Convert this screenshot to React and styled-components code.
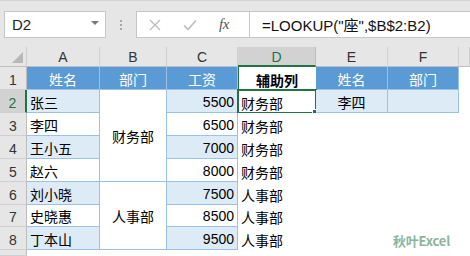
import React from 'react';
import styled, { createGlobalStyle } from 'styled-components';

const GlobalStyle = createGlobalStyle`
  html, body { margin: 0; padding: 0; background: #ffffff; }
  body {
    width: 470px; height: 256px; overflow: hidden;
    font-family: "Liberation Sans", "Noto Sans CJK SC", sans-serif;
  }
`;

const GREEN = '#217346';
const LINE = '#9bc2e6';
const HEAD = '#5b9bd5';
const BAND = '#ddebf7';

const Page = styled.div`
  position: relative;
  width: 470px;
  height: 256px;
  display: flex;
  flex-direction: column;
  background: #ffffff;
`;

const FormulaBar = styled.div`
  height: 47px;
  flex: none;
  box-sizing: border-box;
  background: #e6e6e6;
  border-top: 1px solid #d4d4d4;
  display: flex;
  align-items: flex-start;
  padding: 10px 0 0 4px;
`;

const NameBox = styled.div`
  width: 102px;
  height: 27px;
  box-sizing: border-box;
  background: #fff;
  border: 1px solid #c6c6c6;
  display: flex;
  align-items: center;
  justify-content: space-between;
  padding: 0 6px 0 7px;
  font-size: 15px;
  color: #222;
`;

const Caret = styled.span`
  width: 0; height: 0;
  border-left: 4px solid transparent;
  border-right: 4px solid transparent;
  border-top: 4px solid #777;
  margin-top: -3px;
`;

const Dots = styled.div`
  width: 30px;
  height: 27px;
  display: flex;
  flex-direction: column;
  align-items: center;
  justify-content: center;
  gap: 2px;
`;

const Dot = styled.span`
  width: 2px; height: 2px; background: #a8a8a8;
`;

const FxBox = styled.div`
  width: 113px;
  height: 27px;
  box-sizing: border-box;
  background: #fff;
  border: 1px solid #c6c6c6;
  border-right: none;
  display: flex;
  align-items: center;
  padding-left: 12px;
`;

const IconSlot = styled.span`
  width: ${p => p.$w}px;
  display: flex;
  align-items: center;
`;

const Fx = styled.span`
  font-family: "Liberation Serif", serif;
  font-style: italic;
  font-size: 15px;
  color: #555;
  letter-spacing: -0.5px;
`;

const FormulaInput = styled.div`
  flex: 1;
  height: 27px;
  box-sizing: border-box;
  background: #fff;
  border: 1px solid #c6c6c6;
  border-right: none;
  display: flex;
  align-items: center;
  padding-left: 12px;
  font-size: 15px;
  color: #111;
  white-space: nowrap;
`;

const Sheet = styled.div`
  flex: 1;
  display: grid;
  grid-template-columns: 27px 73px 67px 71px 78px 72px 71px 1fr;
  grid-template-rows: 20px 23px 23px 23px 23px 23px 23px 22px 23px 1fr;
  background: #fff;
`;

const Corner = styled.div`
  background: #e6e6e6;
  border-right: 1px solid #cfcfcf;
  border-bottom: 1px solid #bdbdbd;
  box-sizing: border-box;
  display: flex;
  align-items: flex-end;
  justify-content: flex-end;
  padding: 0 3px 3px 0;
`;

const Tri = styled.span`
  width: 0; height: 0;
  border-left: 11px solid transparent;
  border-bottom: 11px solid #b8b8b8;
`;

const ColHead = styled.div`
  box-sizing: border-box;
  background: ${p => (p.$sel ? '#d2d2d2' : '#e6e6e6')};
  color: ${p => (p.$sel ? GREEN : '#333')};
  border-right: 1px solid ${p => (p.$sel ? '#bdbdbd' : '#d0d0d0')};
  border-bottom: ${p => (p.$sel ? `2px solid ${GREEN}` : '1px solid #bdbdbd')};
  display: flex;
  align-items: flex-end;
  justify-content: center;
  padding-bottom: ${p => (p.$sel ? 1 : 2)}px;
  font-size: 14px;
  line-height: 14px;
`;

const RowHead = styled.div`
  box-sizing: border-box;
  background: ${p => (p.$sel ? '#d2d2d2' : '#e6e6e6')};
  color: ${p => (p.$sel ? GREEN : '#333')};
  border-right: ${p => (p.$sel ? `2px solid ${GREEN}` : '1px solid #bdbdbd')};
  border-bottom: 1px solid #cfcfcf;
  display: flex;
  align-items: flex-end;
  justify-content: center;
  padding-bottom: 2px;
  font-size: 14px;
  line-height: 14px;
`;

const fills = {
  head: HEAD,
  band: BAND,
  white: '#ffffff',
  none: '#ffffff',
};

const Cell = styled.div`
  position: relative;
  box-sizing: border-box;
  background: ${p => fills[p.$fill || 'none']};
  color: ${p => (p.$fill === 'head' ? '#ffffff' : '#000000')};
  border-right: ${p => (p.$grid ? `1px solid ${LINE}` : 'none')};
  border-bottom: ${p => (p.$grid ? `1px solid ${LINE}` : 'none')};
  box-shadow: ${p => (p.$mark ? `inset 1px 0 0 ${GREEN}` : 'none')};
  grid-row: ${p => (p.$span ? `span ${p.$span}` : 'auto')};
  display: flex;
  align-items: ${p => (p.$span ? 'center' : 'flex-end')};
  justify-content: ${p => p.$align || 'flex-start'};
  padding: ${p => (p.$span ? '0 3px' : '0 3px 2px 3px')};
  font-family: ${p => (p.$num ? '"Liberation Sans", sans-serif' : '"Noto Sans CJK SC", sans-serif')};
  font-size: 14px;
  line-height: 16px;
  font-weight: ${p => (p.$bold ? 700 : 400)};
  white-space: nowrap;
`;

const Selection = styled.span`
  position: absolute;
  left: -1px;
  top: -1px;
  right: -1px;
  bottom: -1px;
  border: 2px solid ${GREEN};
  pointer-events: none;
`;

const Handle = styled.span`
  position: absolute;
  right: -4px;
  bottom: -4px;
  width: 5px;
  height: 5px;
  background: ${GREEN};
  border: 1px solid #fff;
`;

const Watermark = styled.div`
  position: absolute;
  left: 393px;
  top: 231px;
  font-family: "Noto Sans CJK SC", sans-serif;
  font-weight: 700;
  font-size: 13px;
  color: #8db59a;
  letter-spacing: -0.2px;
`;

const cols = ['A', 'B', 'C', 'D', 'E', 'F', ''];

const rows = [
  { n: 2, name: '张三', sal: '5500', d: '财务部', band: true },
  { n: 3, name: '李四', sal: '6500', d: '财务部' },
  { n: 4, name: '王小五', sal: '7000', d: '财务部', band: true },
  { n: 5, name: '赵六', sal: '8000', d: '财务部' },
  { n: 6, name: '刘小晓', sal: '7500', d: '人事部', band: true },
  { n: 7, name: '史晓惠', sal: '8500', d: '人事部' },
  { n: 8, name: '丁本山', sal: '9500', d: '人事部', band: true },
];

const CloseIcon = () => (
  <svg width="12" height="12" viewBox="0 0 12 12">
    <path d="M1 1 L11 11 M11 1 L1 11" stroke="#bdbdbd" strokeWidth="1.4" fill="none" />
  </svg>
);

const CheckIcon = () => (
  <svg width="14" height="12" viewBox="0 0 14 12">
    <path d="M1 6.5 L5 10.5 L13 1.5" stroke="#bdbdbd" strokeWidth="1.6" fill="none" />
  </svg>
);

export default function App() {
  return (
    <Page>
      <GlobalStyle />
      <FormulaBar>
        <NameBox>
          <span>D2</span>
          <Caret />
        </NameBox>
        <Dots>
          <Dot />
          <Dot />
          <Dot />
        </Dots>
        <FxBox>
          <IconSlot $w={34}><CloseIcon /></IconSlot>
          <IconSlot $w={36}><CheckIcon /></IconSlot>
          <IconSlot $w={20}><Fx>fx</Fx></IconSlot>
        </FxBox>
        <FormulaInput>=LOOKUP(&quot;座&quot;,$B$2:B2)</FormulaInput>
      </FormulaBar>

      <Sheet>
        <Corner><Tri /></Corner>
        {cols.map((c, i) => (
          <ColHead key={i} $sel={c === 'D'}>{c}</ColHead>
        ))}

        <RowHead>1</RowHead>
        <Cell $fill="head" $grid $align="center">姓名</Cell>
        <Cell $fill="head" $grid $align="center">部门</Cell>
        <Cell $fill="head" $grid $align="center">工资</Cell>
        <Cell $fill="white" $align="center" $bold $mark>辅助列</Cell>
        <Cell $fill="head" $grid $align="center">姓名</Cell>
        <Cell $fill="head" $grid $align="center">部门</Cell>
        <Cell />

        {rows.map((r) => (
          <React.Fragment key={r.n}>
            <RowHead $sel={r.n === 2}>{r.n}</RowHead>
            <Cell $fill={r.band ? 'band' : 'white'} $grid>{r.name}</Cell>
            {r.n === 2 && <Cell $fill="white" $grid $span={4} $align="center">财务部</Cell>}
            {r.n === 6 && <Cell $fill="white" $grid $span={3} $align="center">人事部</Cell>}
            <Cell $fill={r.band ? 'band' : 'white'} $grid $num $align="flex-end">{r.sal}</Cell>
            <Cell>
              {r.d}
              {r.n === 2 && (
                <Selection>
                  <Handle />
                </Selection>
              )}
            </Cell>
            {r.n === 2 ? (
              <>
                <Cell $fill="band" $grid $align="center">李四</Cell>
                <Cell $fill="band" $grid />
              </>
            ) : (
              <>
                <Cell />
                <Cell />
              </>
            )}
            <Cell />
          </React.Fragment>
        ))}

        <RowHead />
        <Cell />
        <Cell />
        <Cell />
        <Cell />
        <Cell />
        <Cell />
        <Cell />
      </Sheet>
      <Watermark>秋叶Excel</Watermark>
    </Page>
  );
}
